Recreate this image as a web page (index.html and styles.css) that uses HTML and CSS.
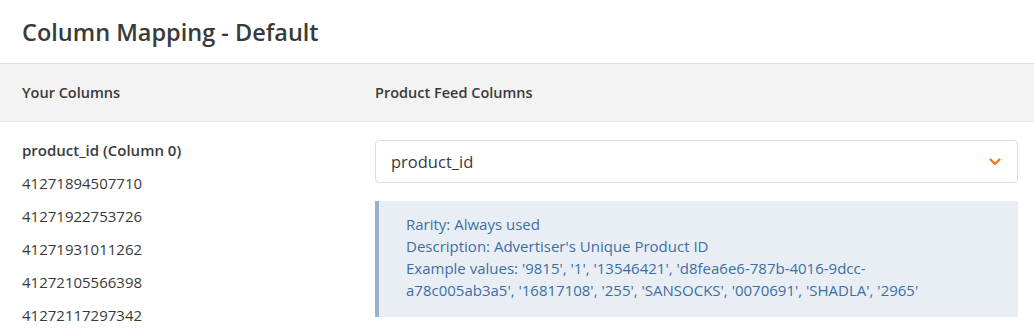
FILE: index.html
```html
<!DOCTYPE html>
<html lang="en">
<head>
<meta charset="UTF-8" />
<meta name="viewport" content="width=device-width, initial-scale=1" />
<title>Column Mapping - Default</title>
<link rel="stylesheet" href="styles.css">
</head>
<body>

<h1 class="title">Column Mapping - Default</h1>

<div class="head-row">
  <div class="col-left">Your Columns</div>
  <div class="col-right">Product Feed Columns</div>
</div>

<div class="map-row">
  <div class="col-left">
    <div class="col-name">product_id (Column 0)</div>
    <div class="sample">41271894507710</div>
    <div class="sample">41271922753726</div>
    <div class="sample">41271931011262</div>
    <div class="sample">41272105566398</div>
    <div class="sample">41272117297342</div>
  </div>
  <div class="col-right">
    <div class="select">
      <span>product_id</span>
      <svg class="chevron" width="12" height="8" viewBox="0 0 12 8">
        <path d="M1.5 1.5 L6 6 L10.5 1.5" fill="none" stroke="#f47b20" stroke-width="2.4" stroke-linecap="round" stroke-linejoin="round"/>
      </svg>
    </div>
    <div class="info">
      Rarity: Always used<br>
      Description: Advertiser's Unique Product ID<br>
      Example values: '9815', '1', '13546421', 'd8fea6e6-787b-4016-9dcc-a78c005ab3a5', '16817108', '255', 'SANSOCKS', '0070691', 'SHADLA', '2965'
    </div>
  </div>
</div>

</body>
</html>
```

FILE: styles.css
```css
body {
  margin: 0;
  background: #fff;
  color: #333;
  font-family: "Open Sans", sans-serif;
  overflow: hidden;
}
.title {
  margin: 0;
  padding: 16px 22px 0;
  height: 47px;
  font-size: 23.5px;
  font-weight: 600;
  color: #3a3a3a;
  border-bottom: 1px solid #ddd;
}
.head-row {
  display: flex;
  align-items: center;
  height: 57px;
  background: #f3f3f3;
  border-bottom: 1px solid #e6e6e6;
  font-size: 14.5px;
  font-weight: 600;
  color: #3a3a3a;
}
.col-left {
  width: 353px;
  padding-left: 22px;
}
.col-right {
  flex: 1;
  padding-right: 16px;
}
.map-row {
  display: flex;
  padding-top: 18px;
}
.col-name {
  font-size: 15px;
  font-weight: 600;
  color: #3a3a3a;
  line-height: 21px;
}
.sample {
  font-size: 15px;
  color: #3a3a3a;
  margin-top: 11px;
  line-height: 22px;
}
.select {
  display: flex;
  align-items: center;
  justify-content: space-between;
  height: 41px;
  padding: 0 16px 0 15px;
  border: 1px solid #ddd;
  border-radius: 4px;
  font-size: 16.5px;
  color: #3a3a3a;
}
.info {
  margin-top: 18px;
  padding: 12px 70px 16px 27px;
  background: #e9eef5;
  border-left: 4px solid #9ab1cd;
  color: #3c6ea4;
  font-size: 15px;
  line-height: 22px;
}
```
